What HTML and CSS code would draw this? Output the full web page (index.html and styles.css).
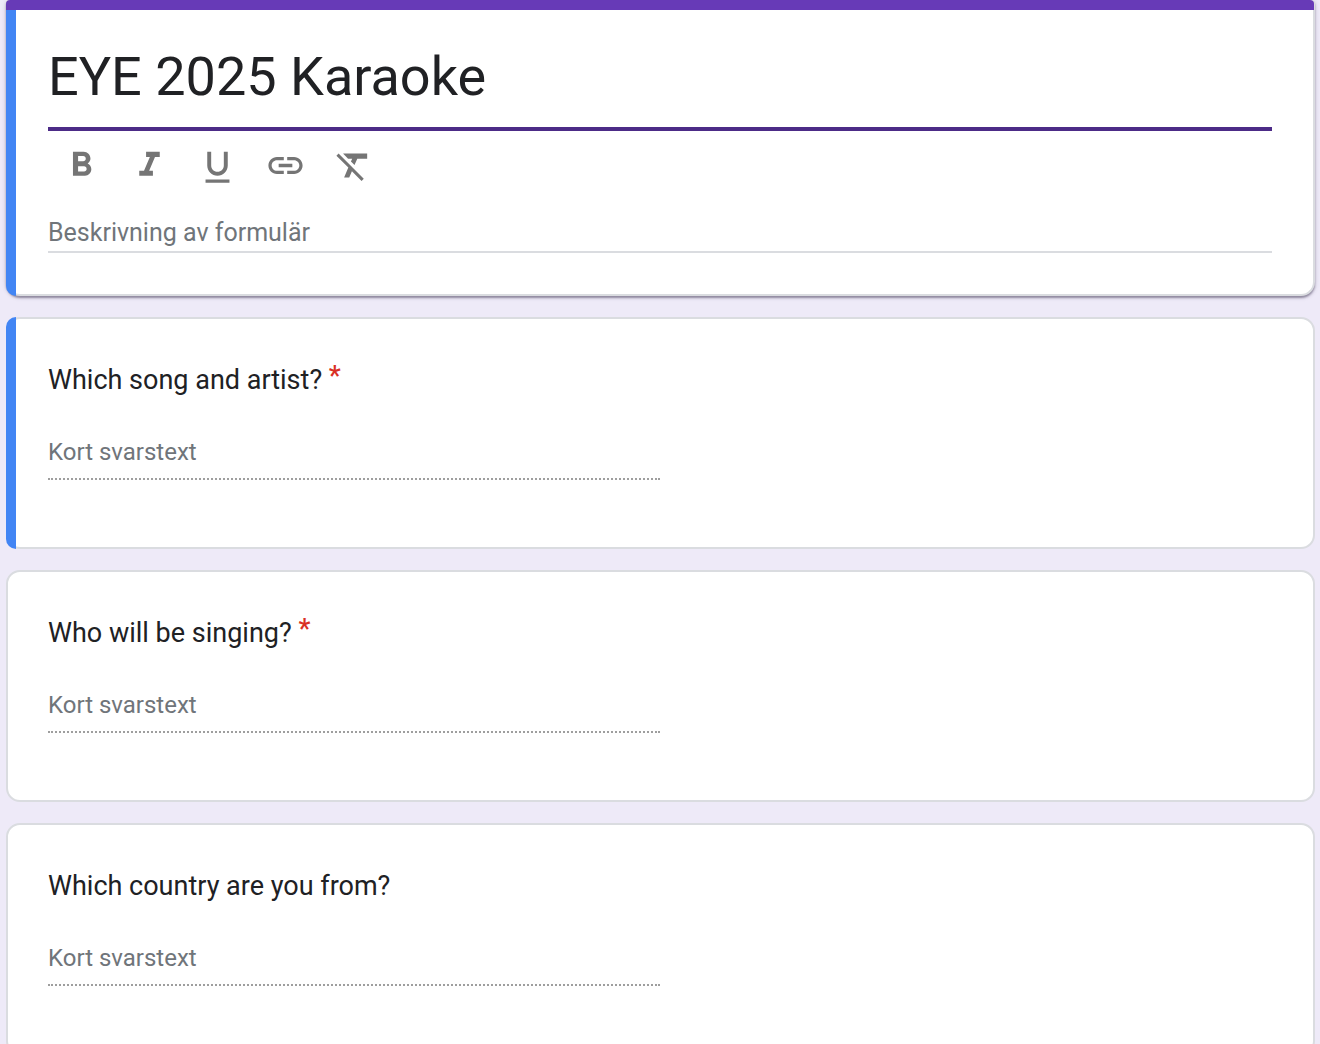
FILE: index.html
```html
<!DOCTYPE html>
<html lang="sv">
<head>
    <meta charset="UTF-8">
    <meta name="viewport" content="width=device-width, initial-scale=1">
    <title>EYE 2025 Karaoke</title>
    <link rel="stylesheet" href="styles.css">
</head>
<body>
<form class="form">
    <!-- Form header -->
    <section class="card card-header active">
        <input class="title" type="text" value="EYE 2025 Karaoke" aria-label="Formulärets titel">
        <div class="toolbar">
            <button type="button" aria-label="Fetstil">
                <svg viewBox="0 0 24 24"><path d="M15.6 10.79c.97-.67 1.65-1.77 1.65-2.79 0-2.26-1.75-4-4-4H7v14h7.04c2.09 0 3.71-1.7 3.71-3.79 0-1.52-.86-2.82-2.15-3.42zM10 6.5h3c.83 0 1.5.67 1.5 1.5s-.67 1.5-1.5 1.5h-3v-3zm3.5 9H10v-3h3.5c.83 0 1.5.67 1.5 1.5s-.67 1.5-1.5 1.5z"/></svg>
            </button>
            <button type="button" aria-label="Kursiv">
                <svg viewBox="0 0 24 24"><path d="M10 4v3h2.21l-3.42 8H6v3h8v-3h-2.21l3.42-8H18V4z"/></svg>
            </button>
            <button type="button" aria-label="Understruken">
                <svg viewBox="0 0 24 24"><path d="M12 18c3.31 0 6-2.69 6-6V4h-2.3v8c0 2.1-1.6 3.7-3.7 3.7S8.3 14.1 8.3 12V4H6v8c0 3.31 2.69 6 6 6zM5 20.2v1.9h14v-1.9H5z"/></svg>
            </button>
            <button type="button" aria-label="Infoga länk">
                <svg viewBox="0 0 24 24"><path d="M3.9 12c0-1.71 1.39-3.1 3.1-3.1h4V7H7c-2.76 0-5 2.24-5 5s2.24 5 5 5h4v-1.9H7c-1.71 0-3.1-1.39-3.1-3.1zM8 13h8v-2H8v2zm9-6h-4v1.9h4c1.71 0 3.1 1.39 3.1 3.1s-1.39 3.1-3.1 3.1h-4V17h4c2.76 0 5-2.24 5-5s-2.24-5-5-5z"/></svg>
            </button>
            <button type="button" aria-label="Ta bort formatering">
                <svg viewBox="0 0 24 24"><path d="M3.27 5L2 6.27l6.97 6.97L6.5 19h3l1.57-3.66L16.73 21 18 19.73 3.55 5.27 3.27 5zM6 5v.18L8.82 8h2.4l-.72 1.68 2.1 2.1L14.21 8H20V5H6z"/></svg>
            </button>
        </div>
        <input class="description" type="text" placeholder="Beskrivning av formulär" aria-label="Beskrivning av formulär">
    </section>

    <!-- Questions -->
    <section class="card question active">
        <label for="song">Which song and artist? <span class="required">*</span></label>
        <input class="answer" id="song" type="text" placeholder="Kort svarstext" disabled>
    </section>

    <section class="card question">
        <label for="singer">Who will be singing? <span class="required">*</span></label>
        <input class="answer" id="singer" type="text" placeholder="Kort svarstext" disabled>
    </section>

    <section class="card question">
        <label for="country">Which country are you from?</label>
        <input class="answer" id="country" type="text" placeholder="Kort svarstext" disabled>
    </section>
</form>
</body>
</html>
```
FILE: styles.css
```css
* {
    box-sizing: border-box;
}

body {
    margin: 0;
    background: #eeeaf8;
    font-family: Roboto, "Liberation Sans", sans-serif;
    color: #202124;
}

.form {
    display: flex;
    flex-direction: column;
    gap: 21px;
    padding: 0 5px 0 6px;
}

.card {
    position: relative;
    display: flex;
    flex-direction: column;
    background: #fff;
    border: 2px solid #dadce0;
    border-radius: 14px;
    padding: 41px 41px 67px 40px;
}

/* blue strip on the left of a selected card */
.active::before {
    content: "";
    position: absolute;
    top: -2px;
    bottom: -2px;
    left: -2px;
    width: 10px;
    background: #4285f4;
    border-radius: 10px 0 0 10px;
}

.card-header {
    border-top: 0;
    border-radius: 4px 4px 14px 14px;
    padding: 40px 41px 41px 40px;
    box-shadow: 0 2px 2px rgba(60, 50, 80, 0.45), 0 1px 5px rgba(60, 50, 80, 0.2);
}

/* theme colour band */
.card-header::after {
    content: "";
    position: absolute;
    top: 0;
    left: -2px;
    right: -1px;
    height: 10px;
    background: #673ab7;
    border-radius: 4px 4px 0 0;
}

.card-header::before {
    top: 10px;
    border-radius: 0 0 0 10px;
}

input {
    width: 100%;
    border: 0;
    padding: 0;
    background: transparent;
    font-family: inherit;
    color: inherit;
    outline: none;
}

input::placeholder {
    color: #70757a;
    opacity: 1;
}

.title {
    height: 91px;
    padding-bottom: 14px;
    border-bottom: 4px solid #4c2b87;
    font-size: 54px;
}

.toolbar {
    display: flex;
    height: 68px;
}

.toolbar button {
    display: flex;
    align-items: center;
    justify-content: center;
    width: 68px;
    border: 0;
    padding: 0 2px 0 0;
    background: none;
    cursor: pointer;
}

.toolbar svg {
    width: 41px;
    height: 41px;
    fill: #757575;
}

.description {
    height: 54px;
    padding-top: 14px;
    border-bottom: 2px solid #dadce0;
    font-size: 25px;
}

.question label {
    font-size: 27px;
    line-height: 40px;
}

.required {
    color: #d93025;
    font-weight: 500;
    vertical-align: 4px;
    line-height: 1;
}

.answer {
    width: 50%;
    height: 55px;
    margin-top: 25px;
    border-bottom: 2px dotted #9e9e9e;
    font-size: 24px;
}
```
